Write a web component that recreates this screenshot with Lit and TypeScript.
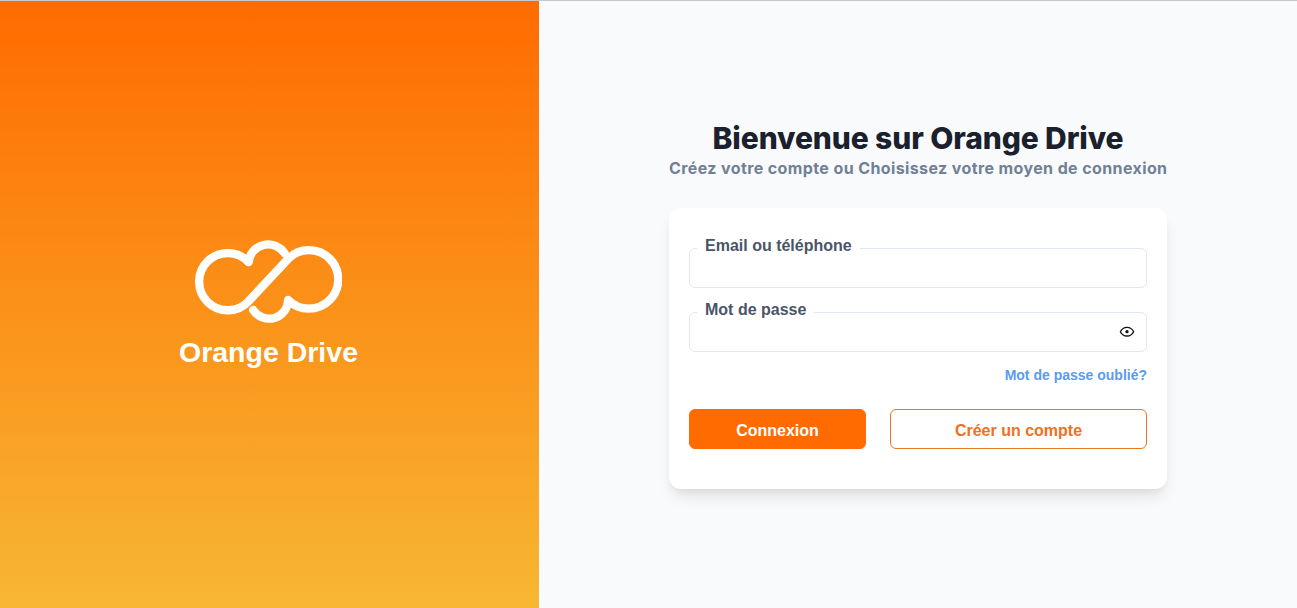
import { LitElement, html, css } from "lit";
import { customElement } from "lit/decorators.js";

@customElement("app-root")
export class AppRoot extends LitElement {
  static styles = css`
    :host {
      display: block;
      font-family: "Liberation Sans", Arial, sans-serif;
    }
    * { box-sizing: border-box; }
    .page {
      display: flex;
      height: 608px;
      border-top: 1px solid #c9c9c9;
      background: #f8fafc;
      overflow: hidden;
    }
    .brand {
      width: 539px;
      flex: none;
      padding-right: 2px;
      background: linear-gradient(180deg, #ff6b00 0%, #f7b733 100%);
      display: flex;
      flex-direction: column;
      align-items: center;
      justify-content: center;
      color: #fff;
    }
    .logo { display: block; width: 147px; height: 83px; }
    .brand-name {
      margin: 12px 0 0;
      font-size: 28.5px;
      line-height: 34px;
      font-weight: 700;
    }
    .main {
      flex: 1;
      display: flex;
      justify-content: center;
      align-items: flex-start;
      padding-top: 120px;
    }
    .col { width: 498px; }
    h1 {
      margin: 0;
      text-align: center;
      font-family: Inter, "Open Sans", sans-serif;
      font-size: 30px;
      line-height: 34px;
      font-weight: 800;
      letter-spacing: -0.1px;
      color: #1a202c;
      white-space: nowrap;
    }
    .sub {
      margin: 1px 0 0;
      text-align: center;
      font-family: Inter, "Open Sans", sans-serif;
      font-size: 16px;
      line-height: 24px;
      font-weight: 700;
      letter-spacing: 0.39px;
      color: #718096;
      white-space: nowrap;
    }
    .card {
      margin-top: 28px;
      background: #fff;
      border-radius: 12px;
      padding: 40px 20px;
      box-shadow: 0 10px 15px -3px rgba(0, 0, 0, 0.1), 0 4px 6px -2px rgba(0, 0, 0, 0.05);
      display: flex;
      flex-direction: column;
    }
    .field {
      position: relative;
      height: 40px;
      border: 1px solid #e2e8f0;
      border-radius: 6px;
      display: flex;
      align-items: center;
      justify-content: flex-end;
      padding-right: 11px;
    }
    .field + .field { margin-top: 24px; }
    .field label {
      position: absolute;
      left: 7px;
      top: -12px;
      padding: 0 8px;
      background: #fff;
      font-size: 16px;
      line-height: 18px;
      font-weight: 700;
      color: #4a5568;
    }
    .field input {
      flex: 1;
      min-width: 0;
      height: 100%;
      border: 0;
      outline: 0;
      background: transparent;
      padding: 0 15px;
      font: inherit;
    }
    .eye { display: block; width: 16px; height: 16px; flex: none; color: #111; }
    .forgot {
      align-self: flex-end;
      margin-top: 15px;
      font-size: 14px;
      line-height: 16px;
      font-weight: 700;
      color: #5b9bef;
      text-decoration: none;
    }
    .actions {
      margin-top: 26px;
      display: grid;
      grid-template-columns: 177px 1fr;
      gap: 24px;
    }
    button {
      height: 40px;
      border-radius: 6px;
      padding: 3px 0 0;
      font: 700 16px "Liberation Sans", Arial, sans-serif;
      cursor: pointer;
    }
    .primary { background: #ff6b00; border: 1px solid #ff6b00; color: #fff; }
    .secondary { background: #fff; border: 1px solid #e87722; color: #ee7022; }
  `;

  render() {
    return html`
      <div class="page">
        <section class="brand">
          <svg class="logo" viewBox="75 33 442 249" fill="none" stroke="#fff" stroke-width="25" stroke-linecap="round" stroke-linejoin="round">
            <path d="M236 99 A86 86 0 1 0 236.5 216.5 L356.5 88 A88 88 0 1 1 355 213 A57 57 0 0 1 250 243" />
            <path d="M236 99 A59.5 59.5 0 0 1 345 73" />
          </svg>
          <p class="brand-name">Orange Drive</p>
        </section>
        <main class="main">
          <div class="col">
            <h1>Bienvenue sur Orange Drive</h1>
            <p class="sub">Créez votre compte ou Choisissez votre moyen de connexion</p>
            <form class="card" @submit=${(e: Event) => e.preventDefault()}>
              <div class="field">
                <label for="id">Email ou téléphone</label>
                <input id="id" type="text" />
              </div>
              <div class="field">
                <label for="pw">Mot de passe</label>
                <input id="pw" type="password" />
                <svg class="eye" viewBox="0 0 24 24" fill="currentColor">
                  <path d="M12 6a9.77 9.77 0 0 1 8.82 5.5A9.77 9.77 0 0 1 12 17a9.77 9.77 0 0 1-8.82-5.5A9.77 9.77 0 0 1 12 6m0-2C7 4 2.73 7.11 1 11.5 2.73 15.89 7 19 12 19s9.27-3.11 11-7.5C21.27 7.11 17 4 12 4zm0 5a2.5 2.5 0 0 1 0 5 2.5 2.5 0 0 1 0-5" />
                </svg>
              </div>
              <a class="forgot" href="#">Mot de passe oublié?</a>
              <div class="actions">
                <button class="primary" type="submit">Connexion</button>
                <button class="secondary" type="button">Créer un compte</button>
              </div>
            </form>
          </div>
        </main>
      </div>
    `;
  }
}
